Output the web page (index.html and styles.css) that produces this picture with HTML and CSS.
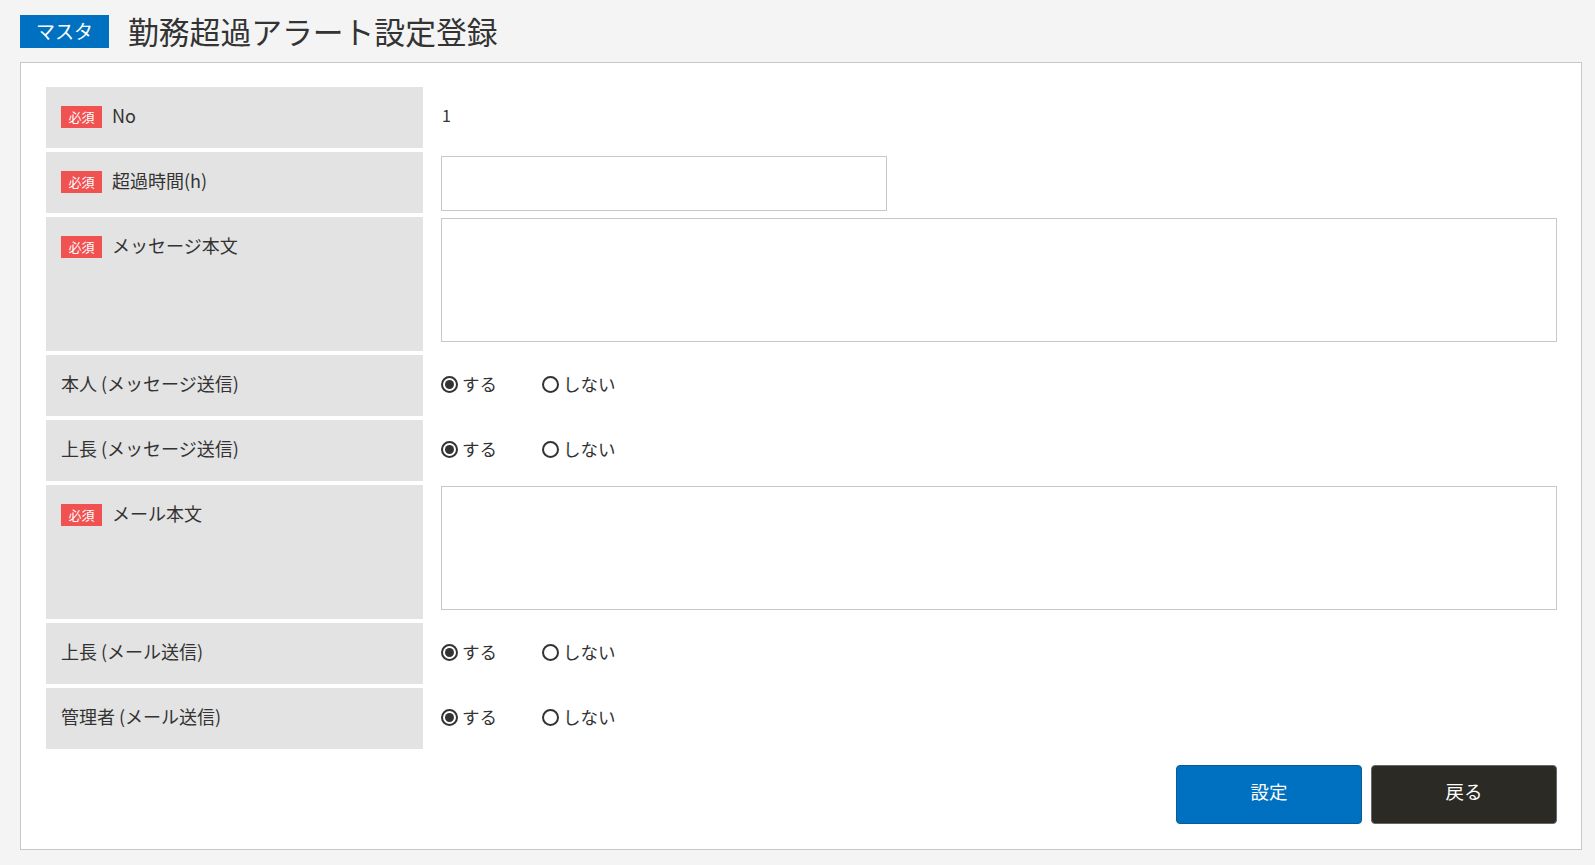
FILE: index.html
```html
<!DOCTYPE html>
<html lang="ja">
<head>
    <meta charset="UTF-8" />
    <meta name="viewport" content="width=device-width, initial-scale=1.0" />
    <title>勤務超過アラート設定登録</title>
    <link rel="stylesheet" href="styles.css">
</head>
<body>
    <!-- ページタイトル -->
    <div class="page-header">
        <span class="page-tag">マスタ</span>
        <h1>勤務超過アラート設定登録</h1>
    </div>

    <div class="panel">
        <div class="form-grid">
            <div class="form-label"><span class="required">必須</span>No</div>
            <div class="form-value"><span class="plain-value">1</span></div>

            <div class="form-label"><span class="required">必須</span>超過時間(h)</div>
            <div class="form-value"><input type="text" class="form-input" /></div>

            <div class="form-label tall"><span class="required">必須</span>メッセージ本文</div>
            <div class="form-value top"><textarea class="form-textarea"></textarea></div>

            <div class="form-label">本人 (メッセージ送信)</div>
            <div class="form-value">
                <label class="radio"><input type="radio" name="self_msg" checked />する</label>
                <label class="radio"><input type="radio" name="self_msg" />しない</label>
            </div>

            <div class="form-label">上長 (メッセージ送信)</div>
            <div class="form-value">
                <label class="radio"><input type="radio" name="boss_msg" checked />する</label>
                <label class="radio"><input type="radio" name="boss_msg" />しない</label>
            </div>

            <div class="form-label tall"><span class="required">必須</span>メール本文</div>
            <div class="form-value top"><textarea class="form-textarea"></textarea></div>

            <div class="form-label">上長 (メール送信)</div>
            <div class="form-value">
                <label class="radio"><input type="radio" name="boss_mail" checked />する</label>
                <label class="radio"><input type="radio" name="boss_mail" />しない</label>
            </div>

            <div class="form-label">管理者 (メール送信)</div>
            <div class="form-value">
                <label class="radio"><input type="radio" name="admin_mail" checked />する</label>
                <label class="radio"><input type="radio" name="admin_mail" />しない</label>
            </div>
        </div>

        <!-- ボタン -->
        <div class="actions">
            <button class="btn btn-primary">設定</button>
            <button class="btn btn-dark">戻る</button>
        </div>
    </div>
</body>
</html>
```

FILE: styles.css
```css
:root {
    --main-blue: #0071c1;
    --label-bg: #e3e3e3;
    --text-color: #333;
    --border-color: #c8c8c8;
    --required-red: #f05252;
}

* {
    margin: 0;
    padding: 0;
    box-sizing: border-box;
}

body {
    background: #f4f4f4;
    font-family: Meiryo, "Noto Sans CJK JP", "Noto Sans", sans-serif;
    color: var(--text-color);
    padding: 15px 13px 0 20px;
}

.page-header {
    display: flex;
    align-items: center;
    gap: 19px;
    height: 33px;
    margin-bottom: 14px;
}

.page-tag {
    background: var(--main-blue);
    color: white;
    font-size: 19px;
    width: 89px;
    height: 33px;
    line-height: 31px;
    text-align: center;
}

.page-header h1 {
    font-size: 30.8px;
    font-weight: 400;
    color: #333;
    line-height: 33px;
    margin-top: -2px;
}

.panel {
    background: white;
    border: 1px solid var(--border-color);
    padding: 24px 24px 25px 25px;
}

.form-grid {
    display: grid;
    grid-template-columns: 377px 1fr;
    column-gap: 18px;
    row-gap: 4px;
}

.form-label {
    background: var(--label-bg);
    height: 61px;
    padding: 15px 16px 0 15px;
    font-size: 18px;
    line-height: 26px;
    display: flex;
    align-items: flex-start;
}

.form-label.tall {
    height: 134px;
}

.required {
    display: inline-block;
    background: var(--required-red);
    color: white;
    font-size: 13px;
    width: 41px;
    height: 22px;
    line-height: 21px;
    text-align: center;
    margin: 4px 10px 0 0;
}

.form-value {
    display: flex;
    align-items: center;
}

.form-value.top {
    align-items: flex-start;
    padding-top: 1px;
}

.plain-value {
    font-size: 16px;
    padding-left: 1px;
    margin-bottom: 5px;
}

.form-input {
    width: 446px;
    height: 55px;
    border: 1px solid var(--border-color);
    font-size: 16px;
    padding: 0 10px;
    margin-top: 2px;
}

.form-textarea {
    width: 100%;
    height: 124px;
    border: 1px solid var(--border-color);
    font-size: 16px;
    padding: 8px 10px;
    resize: none;
    display: block;
}

.radio {
    display: flex;
    align-items: center;
    font-size: 17.5px;
    width: 101px;
    margin-bottom: 5px;
    cursor: pointer;
}

.radio input {
    appearance: none;
    -webkit-appearance: none;
    width: 17px;
    height: 17px;
    border: 2px solid #333;
    border-radius: 50%;
    margin: 2px 4px 0 0;
    display: grid;
    place-items: center;
}

.radio input:checked::before {
    content: '';
    width: 9px;
    height: 9px;
    border-radius: 50%;
    background: #333;
}

.actions {
    display: flex;
    justify-content: flex-end;
    gap: 9px;
    margin-top: 16px;
}

.btn {
    width: 186px;
    height: 59px;
    border-radius: 4px;
    font-family: inherit;
    font-size: 18.5px;
    color: white;
    cursor: pointer;
    padding-bottom: 8px;
}

.btn-primary {
    background: var(--main-blue);
    border: 1px solid #0a5a96;
}

.btn-dark {
    background: #2c2a25;
    border: 1px solid #666;
}
```
